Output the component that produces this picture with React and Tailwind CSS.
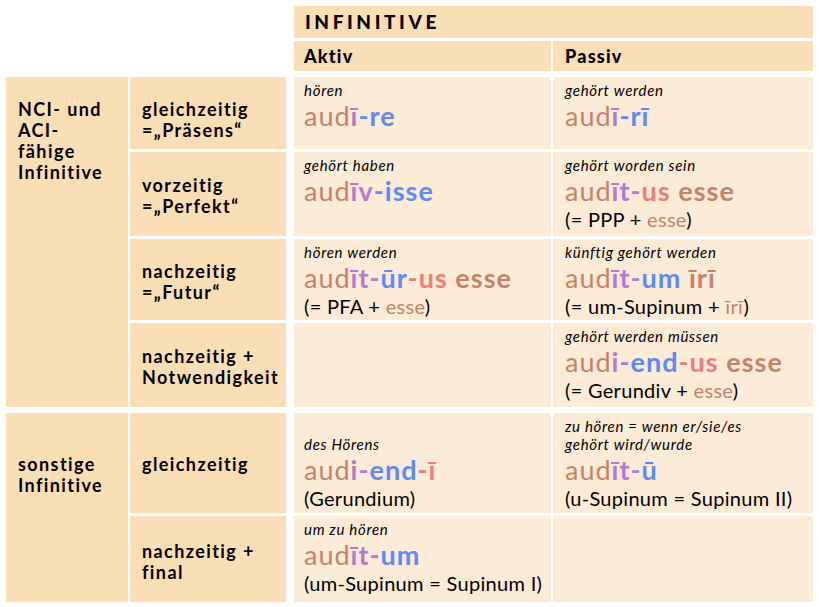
const C = {
  a: 'text-[#c8826a] font-normal',
  p: 'text-[#b27ad2] font-bold',
  b: 'text-[#5f8af4] font-bold',
  r: 'text-[#f27c7a] font-bold',
  e: 'text-[#c8826a] font-bold',
}

function Form({ parts }) {
  return (
    <div className="text-[27px] leading-[30px] tracking-[1px] whitespace-pre">
      {parts.map(([k, t], i) => (
        <span key={i} className={C[k]}>
          {t}
        </span>
      ))}
    </div>
  )
}

function Note({ children }) {
  return <div className="text-[20px] leading-[26px] tracking-[0.3px] text-black">{children}</div>
}

function Esse({ children }) {
  return <span className="text-[#c8826a]">{children}</span>
}

function Gloss({ children }) {
  return <div className="italic text-[15px] leading-[18px] tracking-[0.7px] text-black mb-[2px]">{children}</div>
}

function Cell({ className = '', children }) {
  return <div className={`bg-[#fcebd6] flex flex-col ${className}`}>{children}</div>
}

function Label({ className = '', children }) {
  return (
    <div className={`bg-[#fadeb5] font-bold text-[18px] leading-[21px] tracking-[1.4px] text-black ${className}`}>
      {children}
    </div>
  )
}

export default function App() {
  return (
    <div className="w-[819px] h-[607px] bg-white pl-[6px] pt-[6px]" style={{ fontFamily: 'Lato, "Open Sans", sans-serif' }}>
      <div className="grid grid-cols-[122px_156px_4px_257px_260px] grid-rows-[32px_30px_0px_72px_84px_81px_84px_0px_100px_86px] gap-x-[2px] gap-y-[3px]">
        {/* Header */}
        <div className="col-start-4 col-span-2 row-start-1 bg-[#fadeb5] flex items-center pl-[11px] font-black text-[19px] tracking-[3.6px]">
          INFINITIVE
        </div>
        <div className="col-start-4 row-start-2 bg-[#fadeb5] flex items-center pl-[10px] font-black text-[18px] tracking-[1.2px]">
          Aktiv
        </div>
        <div className="col-start-5 row-start-2 bg-[#fadeb5] flex items-center pl-[12px] font-black text-[18px] tracking-[1.2px]">
          Passiv
        </div>

        {/* NCI/ACI group */}
        <Label className="col-start-1 row-start-4 row-span-4 pl-[12px] pt-[22px]">
          <div>NCI- und</div>
          <div>ACI-</div>
          <div>fähige</div>
          <div>Infinitive</div>
        </Label>

        <Label className="col-start-2 row-start-4 pl-[12px] pt-[22px]">
          <div>gleichzeitig</div>
          <div>=„Präsens“</div>
        </Label>
        <Cell className="col-start-4 row-start-4 pl-[10px] pt-[4px]">
          <Gloss>hören</Gloss>
          <Form parts={[['a', 'aud'], ['p', 'ī'], ['b', '-re']]} />
        </Cell>
        <Cell className="col-start-5 row-start-4 pl-[12px] pt-[4px]">
          <Gloss>gehört werden</Gloss>
          <Form parts={[['a', 'aud'], ['p', 'ī'], ['b', '-rī']]} />
        </Cell>

        <Label className="col-start-2 row-start-5 pl-[12px] pt-[23px]">
          <div>vorzeitig</div>
          <div>=„Perfekt“</div>
        </Label>
        <Cell className="col-start-4 row-start-5 pl-[10px] pt-[4px]">
          <Gloss>gehört haben</Gloss>
          <Form parts={[['a', 'aud'], ['p', 'īv'], ['b', '-isse']]} />
        </Cell>
        <Cell className="col-start-5 row-start-5 pl-[12px] pt-[4px]">
          <Gloss>gehört worden sein</Gloss>
          <Form parts={[['a', 'aud'], ['p', 'īt-'], ['r', 'us'], ['e', ' esse']]} />
          <Note>
            (= PPP + <Esse>esse</Esse>)
          </Note>
        </Cell>

        <Label className="col-start-2 row-start-6 pl-[12px] pt-[22px]">
          <div>nachzeitig</div>
          <div>=„Futur“</div>
        </Label>
        <Cell className="col-start-4 row-start-6 pl-[10px] pt-[4px]">
          <Gloss>hören werden</Gloss>
          <Form parts={[['a', 'aud'], ['p', 'īt-'], ['b', 'ūr'], ['r', '-us'], ['e', ' esse']]} />
          <Note>
            (= PFA + <Esse>esse</Esse>)
          </Note>
        </Cell>
        <Cell className="col-start-5 row-start-6 pl-[12px] pt-[4px]">
          <Gloss>künftig gehört werden</Gloss>
          <Form parts={[['a', 'aud'], ['p', 'īt-'], ['b', 'um'], ['e', ' īrī']]} />
          <Note>
            (= um-Supinum + <Esse>īrī</Esse>)
          </Note>
        </Cell>

        <Label className="col-start-2 row-start-7 pl-[12px] pt-[23px]">
          <div>nachzeitig +</div>
          <div>Notwendigkeit</div>
        </Label>
        <Cell className="col-start-4 row-start-7" />
        <Cell className="col-start-5 row-start-7 pl-[12px] pt-[4px]">
          <Gloss>gehört werden müssen</Gloss>
          <Form parts={[['a', 'aud'], ['p', 'i-'], ['b', 'end'], ['r', '-us'], ['e', ' esse']]} />
          <Note>
            (= Gerundiv + <Esse>esse</Esse>)
          </Note>
        </Cell>

        {/* sonstige */}
        <Label className="col-start-1 row-start-9 row-span-2 pl-[12px] pt-[41px]">
          <div>sonstige</div>
          <div>Infinitive</div>
        </Label>

        <Label className="col-start-2 row-start-9 pl-[12px] pt-[41px]">
          <div>gleichzeitig</div>
        </Label>
        <Cell className="col-start-4 row-start-9 pl-[10px] justify-end pb-[2px]">
          <Gloss>des Hörens</Gloss>
          <Form parts={[['a', 'aud'], ['p', 'i-'], ['b', 'end'], ['r', '-ī']]} />
          <Note>(Gerundium)</Note>
        </Cell>
        <Cell className="col-start-5 row-start-9 pl-[12px] justify-end pb-[2px]">
          <Gloss>
            zu hören = wenn er/sie/es
            <br />
            gehört wird/wurde
          </Gloss>
          <Form parts={[['a', 'aud'], ['p', 'īt-'], ['b', 'ū']]} />
          <Note>(u-Supinum = Supinum II)</Note>
        </Cell>

        <Label className="col-start-2 row-start-10 pl-[12px] pt-[25px]">
          <div>nachzeitig +</div>
          <div>final</div>
        </Label>
        <Cell className="col-start-4 row-start-10 pl-[10px] pt-[4px]">
          <Gloss>um zu hören</Gloss>
          <Form parts={[['a', 'aud'], ['p', 'īt-'], ['b', 'um']]} />
          <Note>(um-Supinum = Supinum I)</Note>
        </Cell>
        <Cell className="col-start-5 row-start-10" />
      </div>
    </div>
  )
}
